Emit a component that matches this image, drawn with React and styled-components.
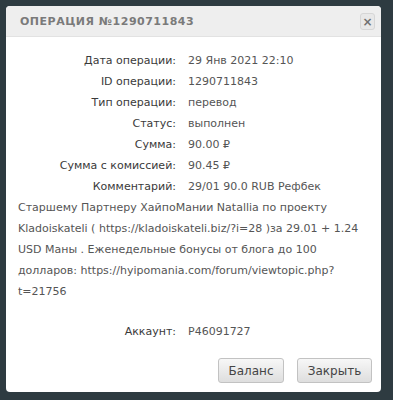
import React from 'react';
import styled, { createGlobalStyle } from 'styled-components';

const GlobalStyle = createGlobalStyle`
  html, body {
    margin: 0;
    padding: 0;
    background: #2e3b41;
  }
  body {
    font-family: "DejaVu Sans", "Liberation Sans", sans-serif;
  }
`;

const Page = styled.div`
  padding: 6px 12px 8px 6px;
`;

const Dialog = styled.div`
  width: 375px;
  height: 386px;
  background: #ffffff;
  border-radius: 4px;
  display: flex;
  flex-direction: column;
  overflow: hidden;
`;

const Header = styled.div`
  height: 30px;
  background: #eeeeee;
  border-bottom: 1px solid #e2e2e2;
  display: flex;
  align-items: center;
  justify-content: space-between;
  padding: 0 6px 0 14px;
`;

const Title = styled.div`
  font-size: 11px;
  font-weight: bold;
  letter-spacing: 0.5px;
  color: #7a7a7a;
  text-transform: uppercase;
`;

const CloseBtn = styled.button`
  width: 15px;
  height: 17px;
  padding: 0;
  border: 1px solid #d6d6d6;
  border-radius: 3px;
  background: #e8e8e8;
  color: #6f6f6f;
  font-size: 12px;
  font-weight: bold;
  line-height: 14px;
  font-family: inherit;
  margin-top: 1px;
`;

const Body = styled.div`
  flex: 1;
  padding: 13px 12px 0;
  font-size: 11px;
  line-height: 21px;
  color: #555;
`;

const Row = styled.div`
  display: flex;
  margin-top: ${p => p.$gap || 0}px;
`;

const Label = styled.span`
  flex: 0 0 158px;
  margin-right: 12px;
  text-align: right;
  color: #3a3a3a;
`;

const Value = styled.span`
  white-space: nowrap;
`;

const Comment = styled.p`
  margin: 0;
`;

const Footer = styled.div`
  display: flex;
  justify-content: flex-end;
  gap: 13px;
  padding: 0 9px 9px;
`;

const Button = styled.button`
  width: ${p => p.$w}px;
  height: 25px;
  border: 1px solid #c2c2c2;
  border-radius: 3px;
  background: linear-gradient(#f7f7f7, #dedede);
  color: #444;
  font-family: "DejaVu Sans", sans-serif;
  font-size: 12px;
  padding: 0;
`;

const rows = [
  ['Дата операции:', '29 Янв 2021 22:10'],
  ['ID операции:', '1290711843'],
  ['Тип операции:', 'перевод'],
  ['Статус:', 'выполнен'],
  ['Сумма:', '90.00 ₽'],
  ['Сумма с комиссией:', '90.45 ₽'],
  ['Комментарий:', '29/01 90.0 RUB Рефбек'],
];

export default function App() {
  return (
    <Page>
      <GlobalStyle />
      <Dialog>
        <Header>
          <Title>Операция №1290711843</Title>
          <CloseBtn>×</CloseBtn>
        </Header>
        <Body>
          {rows.map(([l, v]) => (
            <Row key={l}>
              <Label>{l}</Label>
              <Value>{v}</Value>
            </Row>
          ))}
          <Comment>
            Старшему Партнеру ХайпоМании Natallia по проекту Kladoiskateli ( https://kladoiskateli.biz/?i=28 )за 29.01 + 1.24 USD Маны . Еженедельные бонусы от блога до 100 долларов: https://hyipomania.com/forum/viewtopic.php?t=21756
          </Comment>
          <Row $gap={19}>
            <Label>Аккаунт:</Label>
            <Value>P46091727</Value>
          </Row>
        </Body>
        <Footer>
          <Button $w={66}>Баланс</Button>
          <Button $w={75}>Закрыть</Button>
        </Footer>
      </Dialog>
    </Page>
  );
}
